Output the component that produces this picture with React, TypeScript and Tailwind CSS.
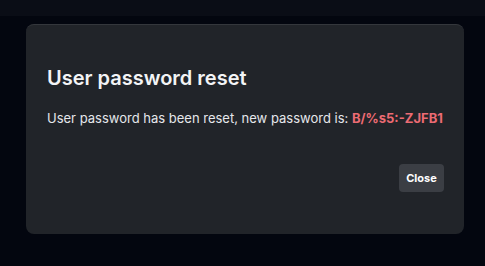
export default function App() {
  return (
    <div className="w-[485px] h-[266px] bg-[#03060f] flex flex-col" style={{ fontFamily: "Inter, 'Noto Sans', sans-serif" }}>
      <div className="h-[16px] bg-[#0a0d16] shrink-0" />
      <div className="pt-[8px] pl-[26px]">
        <div className="w-[438px] h-[210px] rounded-[8px] bg-[#212429] border-t border-[#34373c] pl-[21px] pr-[20px] pt-[39px] flex flex-col">
          <h2 className="text-[20px] leading-[28px] font-semibold text-[#f3f4f6] whitespace-nowrap">User password reset</h2>
          <p className="mt-[16px] text-[13px] leading-[20px] text-[#e5e7eb] whitespace-nowrap">
            User password has been reset, new password is:{" "}
            <span className="font-bold text-[#ec6b73]">B/%s5:-ZJFB1</span>
          </p>
          <div className="mt-[36px] flex justify-end">
            <button className="w-[45px] h-[28px] rounded-[4px] bg-[#3b3e44] text-[11px] font-bold text-white">Close</button>
          </div>
        </div>
      </div>
    </div>
  );
}
